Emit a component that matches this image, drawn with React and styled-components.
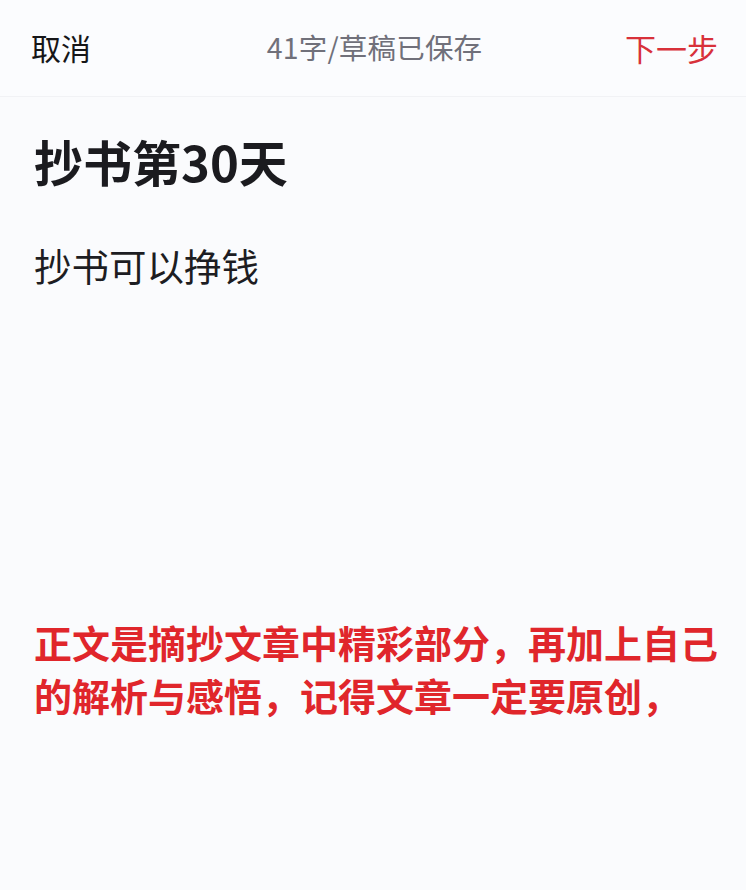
import React from "react";
import styled, { createGlobalStyle } from "styled-components";

const Global = createGlobalStyle`
  html, body { margin: 0; padding: 0; background: #fafbfd; }
  body { font-family: "Noto Sans CJK SC", "Noto Sans", sans-serif; }
`;

const Page = styled.div`
  width: 746px;
  height: 890px;
  background: #fafbfd;
  display: flex;
  flex-direction: column;
  overflow: hidden;
`;

const TopBar = styled.header`
  height: 97px;
  box-sizing: border-box;
  border-bottom: 1px solid #f1f2f5;
  background: #fbfcfe;
  display: flex;
  align-items: center;
  justify-content: space-between;
  padding: 0 28px 2px 31px;
`;

const BarAction = styled.span`
  font-size: ${(p) => p.$size}px;
  color: ${(p) => p.$color};
  line-height: 1;
  width: 130px;
  text-align: ${(p) => p.$align};
`;

const Status = styled.span`
  font-size: 28.5px;
  color: #70707a;
  line-height: 1;
  letter-spacing: 0.2px;
`;

const Body = styled.main`
  flex: 1;
  display: flex;
  flex-direction: column;
  padding: 0 34px;
`;

const Title = styled.h1`
  margin: 35px 0 0;
  font-size: 49px;
  font-weight: 700;
  color: #1b1b1f;
  line-height: 1.2;
`;

const Text = styled.p`
  margin: 51px 0 0;
  font-size: 37.5px;
  color: #1d1d22;
  line-height: 1.2;
`;

const Note = styled.p`
  margin: 328px 0 0;
  font-size: 38px;
  font-weight: 700;
  color: #e0262b;
  line-height: 53px;
  white-space: nowrap;
`;

export default function App() {
  return (
    <>
      <Global />
      <Page>
        <TopBar>
          <BarAction $size={30} $color="#161618" $align="left">取消</BarAction>
          <Status>41字/草稿已保存</Status>
          <BarAction $size={31} $color="#d8313a" $align="right">下一步</BarAction>
        </TopBar>
        <Body>
          <Title>抄书第30天</Title>
          <Text>抄书可以挣钱</Text>
          <Note>
            正文是摘抄文章中精彩部分，再加上自己
            <br />
            的解析与感悟，记得文章一定要原创，
          </Note>
        </Body>
      </Page>
    </>
  );
}
